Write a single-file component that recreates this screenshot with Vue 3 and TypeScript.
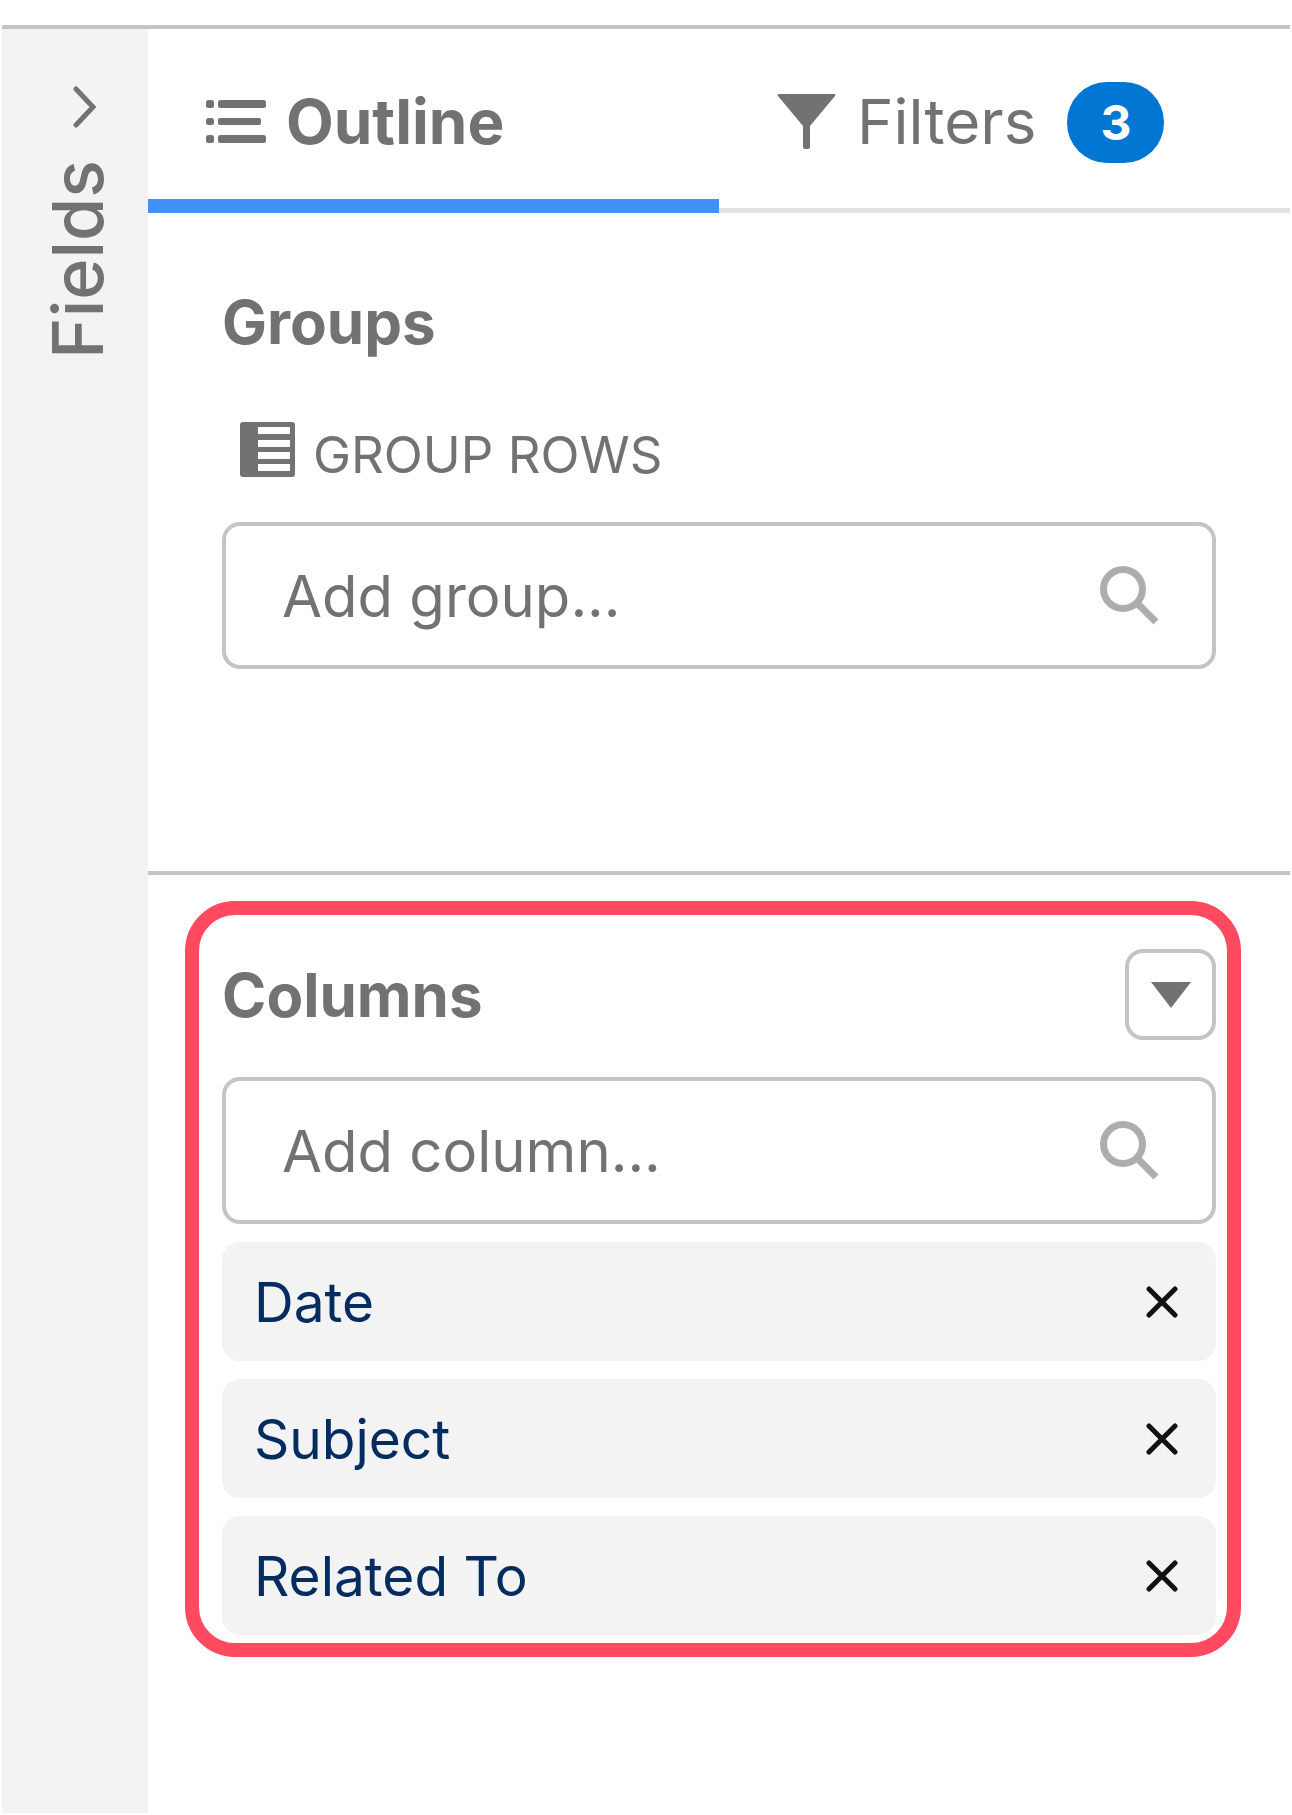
<script setup lang="ts">
import { ref } from 'vue'

type TabName = 'outline' | 'filters'

const activeTab = ref<TabName>('outline')
const filterCount = ref(3)
const groupQuery = ref('')
const columnQuery = ref('')
const columns = ref<string[]>(['Date', 'Subject', 'Related To'])

function removeColumn(name: string): void {
  columns.value = columns.value.filter((column) => column !== name)
}
</script>

<template>
  <div class="page">
    <div class="builder">
      <aside class="rail">
        <button class="rail-toggle" type="button">
          <svg class="chevron" viewBox="0 0 24 42" aria-hidden="true">
            <path d="M3 3 L20 21 L3 39" />
          </svg>
          <span class="rail-label">Fields</span>
        </button>
      </aside>

      <main class="panel">
        <div class="tabs" role="tablist">
          <button
            class="tab"
            :class="{ active: activeTab === 'outline' }"
            type="button"
            role="tab"
            :aria-selected="activeTab === 'outline'"
            @click="activeTab = 'outline'"
          >
            <svg class="icon-list" viewBox="0 0 60 44" aria-hidden="true">
              <rect x="0" y="0" width="8" height="8" rx="2.5" />
              <rect x="12" y="0" width="48" height="8" rx="2.5" />
              <rect x="0" y="18" width="8" height="7" rx="2.5" />
              <rect x="12" y="18" width="43" height="7" rx="2" />
              <rect x="0" y="35" width="8" height="8" rx="2.5" />
              <rect x="12" y="35" width="48" height="8" rx="2.5" />
            </svg>
            <span>Outline</span>
          </button>
          <button
            class="tab"
            :class="{ active: activeTab === 'filters' }"
            type="button"
            role="tab"
            :aria-selected="activeTab === 'filters'"
            @click="activeTab = 'filters'"
          >
            <svg class="icon-filter" viewBox="0 0 60 56" aria-hidden="true">
              <path d="M1 0 H58 Q59 1 58 2 L33 32 V53 Q33 55 31 55 H28 Q26 55 26 53 V32 L1 2 Q0 1 1 0 Z" />
            </svg>
            <span>Filters</span>
            <span class="badge">{{ filterCount }}</span>
          </button>
        </div>

        <section class="groups">
          <h2 class="heading">Groups</h2>
          <label class="row-label" for="group-search">
            <svg class="icon-rows" viewBox="0 0 55 55" aria-hidden="true">
              <rect width="55" height="55" rx="3" />
              <path class="gap" d="M18 5 H50 V12 H18 Z M18 18 H50 V25 H18 Z M18 30 H50 V37 H18 Z M18 42 H50 V49 H18 Z" />
            </svg>
            <span>GROUP ROWS</span>
          </label>
          <div class="search">
            <input id="group-search" v-model="groupQuery" type="text" placeholder="Add group..." />
            <svg class="icon-search" viewBox="0 0 60 60" aria-hidden="true">
              <circle cx="23" cy="23" r="19.5" />
              <path d="M38 38 L56 56" />
            </svg>
          </div>
        </section>

        <section class="columns">
          <div class="columns-head">
            <h2 class="heading">Columns</h2>
            <button class="menu" type="button" aria-label="Column options">
              <svg viewBox="0 0 42 26" aria-hidden="true">
                <path d="M1 0 H41 L21 26 Z" />
              </svg>
            </button>
          </div>
          <div class="search">
            <input v-model="columnQuery" type="text" placeholder="Add column..." aria-label="Add column" />
            <svg class="icon-search" viewBox="0 0 60 60" aria-hidden="true">
              <circle cx="23" cy="23" r="19.5" />
              <path d="M38 38 L56 56" />
            </svg>
          </div>
          <ul class="items">
            <li v-for="column in columns" :key="column" class="item">
              <span>{{ column }}</span>
              <button class="remove" type="button" :aria-label="`Remove ${column}`" @click="removeColumn(column)">
                <svg viewBox="0 0 32 32" aria-hidden="true">
                  <path d="M3 3 L29 29 M29 3 L3 29" />
                </svg>
              </button>
            </li>
          </ul>
        </section>
      </main>
    </div>
  </div>
</template>

<style>
body {
  margin: 0;
  background: #fff;
}
</style>

<style scoped>
.page {
  box-sizing: border-box;
  min-height: 100vh;
  padding: 25px 2px 2px;
  display: flex;
  font-family: Inter, "Liberation Sans", sans-serif;
  color: #727272;
}

.page * {
  box-sizing: border-box;
}

button {
  margin: 0;
  padding: 0;
  border: 0;
  background: none;
  font: inherit;
  color: inherit;
  cursor: pointer;
}

svg {
  display: block;
  flex: none;
  fill: #727272;
}

.builder {
  flex: 1;
  min-width: 0;
  display: flex;
  border-top: 4px solid #c4c4c4;
}

.rail {
  flex: none;
  width: 146px;
  background: #f3f3f3;
}

.rail-toggle {
  width: 100%;
  padding: 57px 0 0 6px;
  display: flex;
  flex-direction: column;
  align-items: center;
  gap: 32px;
}

.chevron {
  width: 24px;
  height: 42px;
  margin-left: 14px;
  fill: none;
  stroke: #727272;
  stroke-width: 5;
  stroke-linecap: round;
}

.rail-label {
  writing-mode: vertical-rl;
  transform: rotate(180deg);
  font-size: 70px;
  font-weight: 500;
  line-height: 84px;
}

.panel {
  flex: 1;
  min-width: 0;
}

.tabs {
  display: grid;
  grid-template-columns: 1fr 1fr;
  height: 184px;
}

.tab {
  display: flex;
  align-items: center;
  padding: 2px 0 0 58px;
  box-shadow: inset 0 -5px #e3e3e3;
  font-size: 62px;
  line-height: 72px;
}

.tab.active {
  box-shadow: inset 0 -14px #4092fa;
  font-weight: 700;
}

.icon-list {
  width: 60px;
  height: 44px;
  margin-right: 20px;
}

.icon-filter {
  width: 60px;
  height: 56px;
  margin-right: 20px;
}

.badge {
  width: 97px;
  height: 81px;
  margin-left: 31px;
  border-radius: 40px;
  background: #0176d3;
  color: #fff;
  font-size: 48px;
  font-weight: 700;
  line-height: 81px;
  text-align: center;
}

.groups {
  padding: 73px 74px 202px 74px;
  border-bottom: 4px solid #c4c4c4;
}

.heading {
  margin: 0;
  font-size: 60px;
  font-weight: 700;
  line-height: 72px;
}

.row-label {
  display: flex;
  align-items: flex-start;
  gap: 18px;
  margin: 64px 0 34px;
  padding-left: 18px;
  font-size: 51px;
  line-height: 66px;
}

.icon-rows {
  width: 55px;
  height: 55px;
}

.icon-rows .gap {
  fill: #fff;
}

.search {
  display: flex;
  align-items: center;
  height: 147px;
  padding: 0 52px 0 56px;
  border: 4px solid #c4c4c4;
  border-radius: 18px;
}

.search input {
  flex: 1;
  min-width: 0;
  padding: 0;
  border: 0;
  outline: 0;
  background: none;
  font: inherit;
  font-size: 58px;
  line-height: 72px;
  color: #727272;
}

.search input::placeholder {
  color: #727272;
  opacity: 1;
}

.icon-search {
  width: 60px;
  height: 60px;
  fill: none;
  stroke: #adadad;
  stroke-width: 7;
}

.columns {
  margin: 26px 49px 0 37px;
  padding: 34px 11px 8px 23px;
  border: 14px solid #ff4a60;
  border-radius: 50px;
}

.columns-head {
  display: flex;
  align-items: center;
  justify-content: space-between;
  margin-bottom: 37px;
}

.menu {
  display: grid;
  place-items: center;
  width: 91px;
  height: 91px;
  border: 4px solid #c4c4c4;
  border-radius: 18px;
}

.menu svg {
  width: 42px;
  height: 26px;
}

.items {
  display: grid;
  gap: 18px;
  margin: 18px 0 0;
  padding: 0;
  list-style: none;
}

.item {
  display: flex;
  align-items: center;
  justify-content: space-between;
  height: 119px;
  padding: 0 38px 0 32px;
  border-radius: 18px;
  background: #f3f3f3;
  color: #032d60;
  font-size: 55px;
  line-height: 66px;
}

.remove svg {
  width: 32px;
  height: 32px;
  fill: none;
  stroke: #111;
  stroke-width: 5;
  stroke-linecap: round;
}
</style>
